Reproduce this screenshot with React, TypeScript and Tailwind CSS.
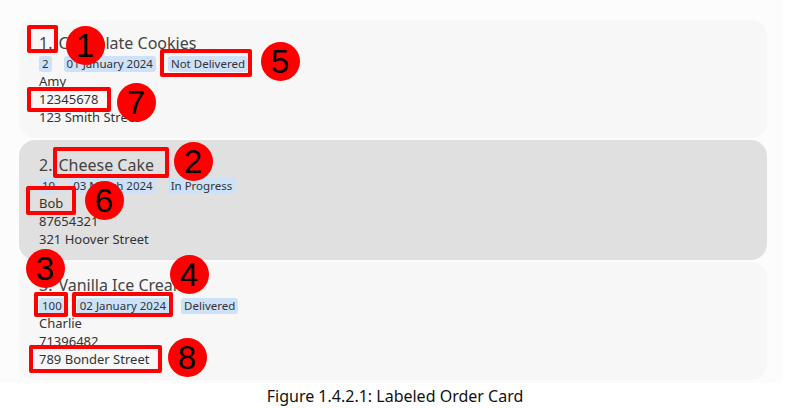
import React from "react";

type Order = {
  idx: number;
  title: string;
  qty: string;
  date: string;
  status: string;
  name: string;
  phone: string;
  address: string;
  selected?: boolean;
};

const orders: Order[] = [
  { idx: 1, title: "Chocolate Cookies", qty: "2", date: "01 January 2024", status: "Not Delivered", name: "Amy", phone: "12345678", address: "123 Smith Street" },
  { idx: 2, title: "Cheese Cake", qty: "10", date: "03 March 2024", status: "In Progress", name: "Bob", phone: "87654321", address: "321 Hoover Street", selected: true },
  { idx: 3, title: "Vanilla Ice Cream", qty: "100", date: "02 January 2024", status: "Delivered", name: "Charlie", phone: "71396482", address: "789 Bonder Street" },
];

function Badge({ children }: { children: React.ReactNode }) {
  return (
    <span className="inline-flex h-[16px] items-center rounded-[3px] bg-[#cde1f8] px-[3px] text-[11.5px] leading-none text-[#333]">
      {children}
    </span>
  );
}

function Card({ o }: { o: Order }) {
  return (
    <div
      className={`flex flex-col rounded-[16px] pl-[20px] ${o.selected ? "h-[120px] bg-[#e0e0e0] pt-[14px]" : "h-[118px] bg-[#f7f7f7] pt-[12px]"}`}
    >
      <div className="flex h-[22px] items-center gap-[6px] text-[16px] text-[#444]">
        <span>{o.idx}.</span>
        <span>{o.title}</span>
      </div>
      <div className="flex h-[19px] items-center gap-[12px]">
        <Badge>{o.qty}</Badge>
        <Badge>{o.date}</Badge>
        <Badge>{o.status}</Badge>
      </div>
      <div className="flex h-[18px] items-center text-[13px] text-[#333]">{o.name}</div>
      <div className="flex h-[18px] items-center text-[13px] text-[#333]">{o.phone}</div>
      <div className="flex h-[18px] items-center text-[13px] text-[#333]">{o.address}</div>
    </div>
  );
}

function Box({ l, t, w, h }: { l: number; t: number; w: number; h: number }) {
  return (
    <div
      className="absolute rounded-[2px] border-[4px] border-[#ff0000]"
      style={{ left: l, top: t, width: w, height: h }}
    />
  );
}

function Num({ cx, cy, n }: { cx: number; cy: number; n: string }) {
  return (
    <div
      className="absolute flex h-[39px] w-[39px] items-center justify-center rounded-full bg-[#ff0000] text-[33px] leading-none text-black"
      style={{ left: cx - 19.5, top: cy - 19.5, fontFamily: '"Liberation Sans", Arial, sans-serif' }}
    >
      {n}
    </div>
  );
}

export default function App() {
  return (
    <div
      className="relative h-[408px] w-[790px] overflow-hidden bg-white"
      style={{ fontFamily: '"Noto Sans", "Open Sans", sans-serif' }}
    >
      <div className="h-[383px] w-[783px] bg-[#fcfcfc] pl-[19px] pt-[20px]">
        <div className="flex w-[748px] flex-col gap-[2px]">
          {orders.map((o) => (
            <Card key={o.idx} o={o} />
          ))}
        </div>
      </div>
      <div className="flex h-[25px] items-center justify-center text-[16px] text-[#111]">
        Figure 1.4.2.1: Labeled Order Card
      </div>

      {/* annotation overlays */}
      <Box l={27} t={25} w={31} h={28} />
      <Num cx={85} cy={45} n="1" />
      <Box l={160} t={49} w={92} h={28} />
      <Num cx={280} cy={61} n="5" />
      <Box l={27} t={87} w={84} h={25} />
      <Num cx={136} cy={102} n="7" />

      <Box l={53} t={147} w={116} h={31} />
      <Num cx={193} cy={161} n="2" />
      <Box l={26} t={186} w={50} h={29} />
      <Num cx={104} cy={200} n="6" />

      <Num cx={45} cy={268} n="3" />
      <Num cx={189} cy={274} n="4" />
      <Box l={34} t={292} w={34} h={25} />
      <Box l={72} t={292} w={101} h={25} />
      <Box l={29} t={345} w={133} h={28} />
      <Num cx={187} cy={357} n="8" />
    </div>
  );
}
